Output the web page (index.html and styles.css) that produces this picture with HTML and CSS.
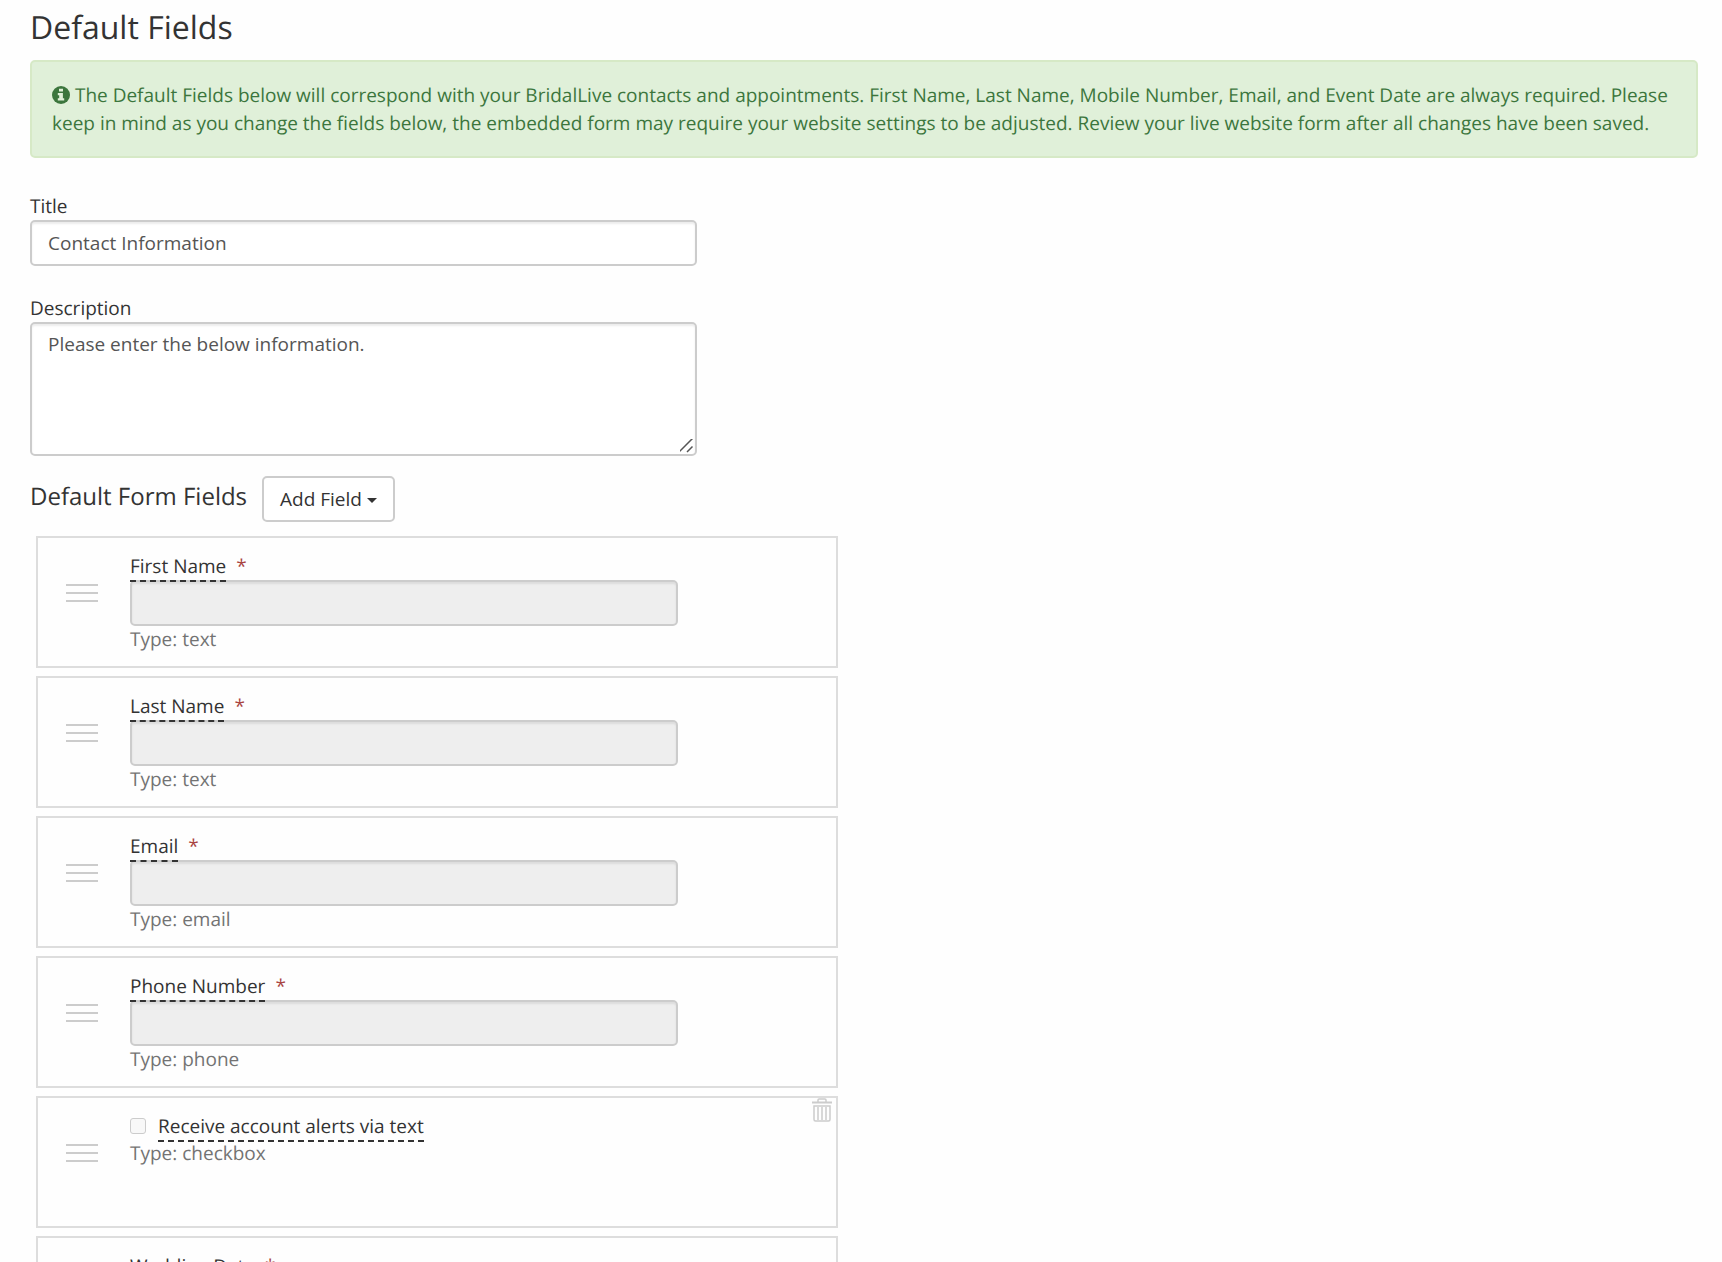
FILE: index.html
```html
<!DOCTYPE html>
<html lang="en">
<head>
    <meta charset="UTF-8">
    <meta name="viewport" content="width=device-width, initial-scale=1.0">
    <title>Default Fields</title>
    <link rel="stylesheet" href="styles.css">
</head>
<body>
    <main class="container">
        <h1>Default Fields</h1>

        <div class="alert">
            <svg class="icon-info" viewBox="0 0 18 18" aria-hidden="true">
                <circle cx="9" cy="9" r="9" fill="currentColor"/>
                <path d="M7 2.8h4v2.6H7zM5.8 7h5.1v5.2h1.3v2.2H5.8v-2.2h1.4v-3H5.8z" fill="#e0f0d9"/>
            </svg>
            The Default Fields below will correspond with your BridalLive contacts and appointments. First Name, Last Name, Mobile Number, Email, and Event Date are always required. Please keep in mind as you change the fields below, the embedded form may require your website settings to be adjusted. Review your live website form after all changes have been saved.
        </div>

        <form>
            <div class="form-group">
                <label for="title">Title</label>
                <input class="form-control" type="text" id="title" value="Contact Information">
            </div>
            <div class="form-group">
                <label for="description">Description</label>
                <textarea class="form-control" id="description">Please enter the below information.</textarea>
            </div>

            <div class="fields-header">
                <h2>Default Form Fields</h2>
                <button type="button" class="btn">Add Field <span class="caret"></span></button>
            </div>

            <!-- Sortable fields -->
            <ul class="field-list">
                <li class="field">
                    <span class="handle"></span>
                    <div class="field-body">
                        <div class="field-label"><label class="editable" for="firstName">First Name</label><span class="required">*</span></div>
                        <input class="form-control" type="text" id="firstName" disabled>
                        <p class="type">Type: text</p>
                    </div>
                </li>
                <li class="field">
                    <span class="handle"></span>
                    <div class="field-body">
                        <div class="field-label"><label class="editable" for="lastName">Last Name</label><span class="required">*</span></div>
                        <input class="form-control" type="text" id="lastName" disabled>
                        <p class="type">Type: text</p>
                    </div>
                </li>
                <li class="field">
                    <span class="handle"></span>
                    <div class="field-body">
                        <div class="field-label"><label class="editable" for="email">Email</label><span class="required">*</span></div>
                        <input class="form-control" type="email" id="email" disabled>
                        <p class="type">Type: email</p>
                    </div>
                </li>
                <li class="field">
                    <span class="handle"></span>
                    <div class="field-body">
                        <div class="field-label"><label class="editable" for="phone">Phone Number</label><span class="required">*</span></div>
                        <input class="form-control" type="tel" id="phone" disabled>
                        <p class="type">Type: phone</p>
                    </div>
                </li>
                <li class="field">
                    <span class="handle"></span>
                    <div class="field-body">
                        <div class="field-check">
                            <input type="checkbox" id="alerts" disabled>
                            <label class="editable" for="alerts">Receive account alerts via text</label>
                        </div>
                        <p class="type">Type: checkbox</p>
                    </div>
                    <button type="button" class="delete" aria-label="Delete field">
                        <svg viewBox="0 0 20 24" fill="none" stroke="currentColor">
                            <path d="M0 4.500h20" stroke-width="2"/>
                            <path d="M6 4V2q0-1 1-1h6q1 0 1 1v2" stroke-width="1.5"/>
                            <path d="M2 8h16v13.500q0 1.500-1.500 1.500h-13q-1.500 0-1.500-1.500z" stroke-width="1.5"/>
                            <path d="M6 9v13M10 9v13M14 9v13" stroke-width="1.5"/>
                        </svg>
                    </button>
                </li>
                <li class="field">
                    <span class="handle"></span>
                    <div class="field-body">
                        <div class="field-label"><label class="editable" for="weddingDate">Wedding Date</label><span class="required">*</span></div>
                        <input class="form-control" type="text" id="weddingDate" disabled>
                        <p class="type">Type: date</p>
                    </div>
                </li>
            </ul>
        </form>
    </main>
</body>
</html>
```
FILE: styles.css
```css
* {
    box-sizing: border-box;
}
body {
    margin: 0;
    font-family: "Open Sans", sans-serif;
    font-size: 19px;
    line-height: 28px;
    text-rendering: geometricPrecision;
    color: #333;
    background-color: #fefefe;
}
.container {
    padding: 8px 24px 0 30px;
}
h1, h2 {
    margin: 0;
    font-weight: 400;
}
h1 {
    margin-bottom: 12px;
    font-size: 32px;
    line-height: 40px;
}
.alert {
    margin-bottom: 34px;
    padding: 19px 20px;
    border: 2px solid #d6e9c6;
    border-radius: 5px;
    background-color: #e0f0d9;
    color: #3c763d;
}
.icon-info {
    width: 18px;
    height: 18px;
    vertical-align: -2px;
}
.form-group {
    width: 40%;
    margin-bottom: 28px;
}
.form-group label {
    display: block;
}
.form-control {
    display: block;
    width: 100%;
    height: 46px;
    padding: 6px 16px;
    border: 2px solid #ccc;
    border-radius: 5px;
    background-color: #fff;
    box-shadow: inset 0 2px 2px rgba(0, 0, 0, 0.075);
    font: inherit;
    color: #555;
}
.form-control:disabled {
    background-color: #eee;
}
textarea.form-control {
    height: 134px;
    resize: vertical;
}
textarea::-webkit-resizer {
    background: url("data:image/svg+xml,%3Csvg xmlns='http://www.w3.org/2000/svg' viewBox='0 0 15 15'%3E%3Cpath d='M-1 13L12.500 -.5M7 13L12.500 7.500' stroke='%23555' stroke-width='1.500'/%3E%3C/svg%3E") no-repeat;
}
.fields-header {
    display: flex;
    align-items: flex-start;
    gap: 15px;
    margin: -8px 0 14px;
}
h2 {
    font-size: 24px;
    line-height: 42px;
}
.btn {
    height: 46px;
    padding: 0 16px;
    border: 2px solid #ccc;
    border-radius: 5px;
    background-color: #fff;
    font: inherit;
    color: #333;
    cursor: pointer;
}
.caret {
    display: inline-block;
    border-top: 5px solid #333;
    border-right: 5px solid transparent;
    border-left: 5px solid transparent;
    vertical-align: middle;
}
.field-list {
    display: flex;
    flex-direction: column;
    gap: 8px;
    width: 50%;
    margin: 0;
    padding: 0 26px 0 6px;
    list-style: none;
}
.field {
    position: relative;
    display: flex;
    gap: 32px;
    min-height: 132px;
    padding: 14px 158px 12px 28px;
    border: 2px solid #ddd;
}
.handle {
    flex: none;
    align-self: flex-start;
    width: 32px;
    height: 18px;
    margin-top: 32px;
    border-top: 2px solid #ccc;
    border-bottom: 2px solid #ccc;
    background: linear-gradient(#ccc, #ccc) center / 100% 2px no-repeat;
    cursor: move;
}
.field-body {
    flex: 1;
}
.field-label {
    display: flex;
    gap: 10px;
    height: 28px;
}
.editable {
    height: 30px;
    border-bottom: 2px dashed #333;
    z-index: 1;
}
.required {
    color: #a94442;
}
.type {
    margin: 0;
    line-height: 26px;
    color: #737373;
}
.field-check {
    display: flex;
    gap: 12px;
    height: 28px;
}
.field-check input {
    appearance: none;
    width: 16px;
    height: 16px;
    margin: 6px 0 0;
    border: 1px solid #ccc;
    border-radius: 3px;
    background-color: #f8f8f8;
}
.delete {
    position: absolute;
    top: 0;
    right: 4px;
    width: 20px;
    height: 24px;
    padding: 0;
    border: 0;
    background: none;
    color: #ccc;
    cursor: pointer;
}
.delete svg {
    display: block;
}
```
